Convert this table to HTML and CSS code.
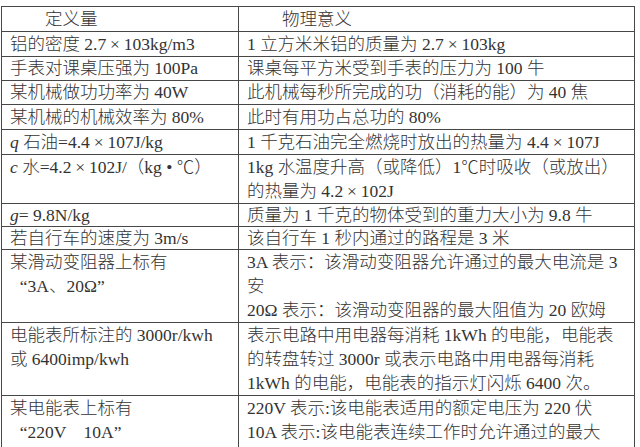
FILE: index.html
```html
<!DOCTYPE html>
<html lang="zh-CN">
<head>
<meta charset="utf-8">
<title>物理量定义与意义</title>
<link rel="stylesheet" href="styles.css">
</head>
<body>
<table class="sheet">
  <colgroup><col class="c1"><col class="c2"></colgroup>
  <tr class="head"><td>定义量</td><td>物理意义</td></tr>
  <tr><td>铝的密度 2.7<span class="x">×</span>103kg/m3</td><td>1 立方米米铝的质量为 2.7<span class="x">×</span>103kg</td></tr>
  <tr class="t23"><td>手表对课桌压强为 100Pa</td><td>课桌每平方米受到手表的压力为 100 牛</td></tr>
  <tr class="t23"><td>某机械做功功率为 40W</td><td>此机械每秒所完成的功（消耗的能）为 40 焦</td></tr>
  <tr><td>某机械的机械效率为 80%</td><td>此时有用功占总功的 80%</td></tr>
  <tr><td><i>q</i> 石油=4.4<span class="x">×</span>107J/kg</td><td>1 千克石油完全燃烧时放出的热量为 4.4<span class="x">×</span>107J</td></tr>
  <tr><td><i>c</i> 水=4.2<span class="x">×</span>102J/（kg • ℃）</td><td>1kg 水温度升高（或降低）1℃时吸收（或放出）<br>的热量为 4.2<span class="x">×</span>102J</td></tr>
  <tr class="t22"><td><i>g</i>= 9.8N/kg</td><td>质量为 1 千克的物体受到的重力大小为 9.8 牛</td></tr>
  <tr class="t22"><td>若自行车的速度为 3m/s</td><td>该自行车 1 秒内通过的路程是 3 米</td></tr>
  <tr><td>某滑动变阻器上标有<br><span class="q">“</span>3A、20Ω”</td><td>3A 表示：该滑动变阻器允许通过的最大电流是 3<br>安<br>20Ω 表示：该滑动变阻器的最大阻值为 20 欧姆</td></tr>
  <tr><td>电能表所标注的 3000r/kwh<br>或 6400imp/kwh</td><td>表示电路中用电器每消耗 1kWh 的电能，电能表<br>的转盘转过 3000r 或表示电路中用电器每消耗<br>1kWh 的电能，电能表的指示灯闪烁 6400 次。</td></tr>
  <tr><td>某电能表上标有<br><span class="q">“</span>220V　10A”</td><td>220V 表示:该电能表适用的额定电压为 220 伏<br>10A 表示:该电能表连续工作时允许通过的最大<br>电流为 10 安培</td></tr>
</table>
</body>
</html>
```

FILE: styles.css
```css
html, body {
  margin: 0;
  background: #fff;
}
body {
  padding: 6px 0 0 1px;
  font-family: "Liberation Serif", "Noto Sans CJK SC", serif;
  font-size: 17.5px;
  font-weight: 300;
  color: #333;
}
.sheet {
  border-collapse: collapse;
  table-layout: fixed;
  width: 633px;
}
.c1 { width: 237px; }
.c2 { width: 396px; }
.sheet td {
  border: 1px solid #474747;
  padding: 0 0 0 8px;
  line-height: 24px;
  vertical-align: top;
  white-space: nowrap;
  overflow: hidden;
}
.head td { text-indent: 2em; }
.t23 td { line-height: 23px; }
.t22 td { line-height: 22px; }
.x {
  display: inline-block;
  width: 1em;
  text-align: center;
}
.q {
  display: inline-block;
  width: 1em;
  text-align: right;
}
```
